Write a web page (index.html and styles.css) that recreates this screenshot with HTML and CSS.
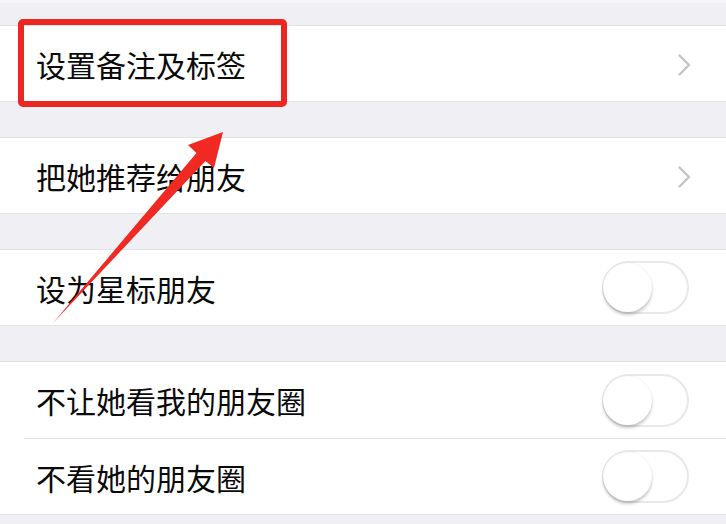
FILE: index.html
```html
<!DOCTYPE html>
<html lang="zh-CN">
<head>
<meta charset="utf-8">
<title>资料设置</title>
<link rel="stylesheet" href="styles.css">
</head>
<body>
<div class="page">
  <section class="group">
    <div class="row">
      <span class="label">设置备注及标签</span>
      <svg class="chevron" width="13" height="22" viewBox="0 0 13 22"><polyline points="1.5,1.5 11,11 1.5,20.5" fill="none" stroke="#c4c4c9" stroke-width="2.4" stroke-linecap="round" stroke-linejoin="round"/></svg>
    </div>
  </section>
  <section class="group">
    <div class="row">
      <span class="label">把她推荐给朋友</span>
      <svg class="chevron" width="13" height="22" viewBox="0 0 13 22"><polyline points="1.5,1.5 11,11 1.5,20.5" fill="none" stroke="#c4c4c9" stroke-width="2.4" stroke-linecap="round" stroke-linejoin="round"/></svg>
    </div>
  </section>
  <section class="group">
    <div class="row">
      <span class="label">设为星标朋友</span>
      <span class="switch"><span class="knob"></span></span>
    </div>
  </section>
  <section class="group">
    <div class="row tall">
      <span class="label">不让她看我的朋友圈</span>
      <span class="switch"><span class="knob"></span></span>
    </div>
    <div class="row sep">
      <span class="label">不看她的朋友圈</span>
      <span class="switch"><span class="knob"></span></span>
    </div>
  </section>

  <div class="highlight"></div>
  <svg class="arrow" width="726" height="524" viewBox="0 0 726 524">
    <polygon points="53,323 196.5,153 188,145 223,132 214,168 205.5,161" fill="#f02a22"/>
  </svg>
</div>
</body>
</html>
```

FILE: styles.css
```css
html, body {
  margin: 0;
  padding: 0;
}
body {
  background: #efeff4;
  font-family: "Noto Sans CJK SC", "Noto Sans", sans-serif;
  color: #0a0a0a;
}
.page {
  position: relative;
  width: 726px;
  height: 524px;
  overflow: hidden;
  background: #efeff4;
  background-image: linear-gradient(#f6f6f8, #f6f6f8);
  background-size: 100% 3px;
  background-repeat: no-repeat;
  padding-top: 25px;
  box-sizing: border-box;
}
.group {
  background: #fff;
  border-top: 1px solid #e2e2e6;
  border-bottom: 1px solid #e2e2e6;
  margin-bottom: 35px;
}
.row {
  height: 75px;
  display: flex;
  align-items: center;
  justify-content: space-between;
  padding: 0 36px 0 36px;
}
.row.tall {
  height: 76px;
}
.row.sep {
  height: 75px;
  margin-left: 24px;
  padding-left: 12px;
  border-top: 1px solid #e4e4e8;
}
.label {
  font-size: 30px;
  line-height: 1;
  letter-spacing: 0;
}
.chevron {
  display: block;
  margin-right: -1px;
  margin-top: 3px;
}
.switch {
  position: relative;
  width: 87px;
  height: 53px;
  box-sizing: border-box;
  border: 2px solid #e8e8ec;
  border-radius: 27px;
  background: #fff;
  margin-right: 1px;
}
.knob {
  position: absolute;
  left: -1px;
  top: 0px;
  width: 49px;
  height: 49px;
  border-radius: 50%;
  background: #fff;
  box-shadow: 0 3px 3px rgba(0,0,0,0.2), 0 0 1px rgba(0,0,0,0.12);
}
.highlight {
  position: absolute;
  left: 18px;
  top: 19px;
  width: 269px;
  height: 88px;
  box-sizing: border-box;
  border: 6px solid #ec2620;
  border-radius: 5px;
}
.arrow {
  position: absolute;
  left: 0;
  top: 0;
}
```
